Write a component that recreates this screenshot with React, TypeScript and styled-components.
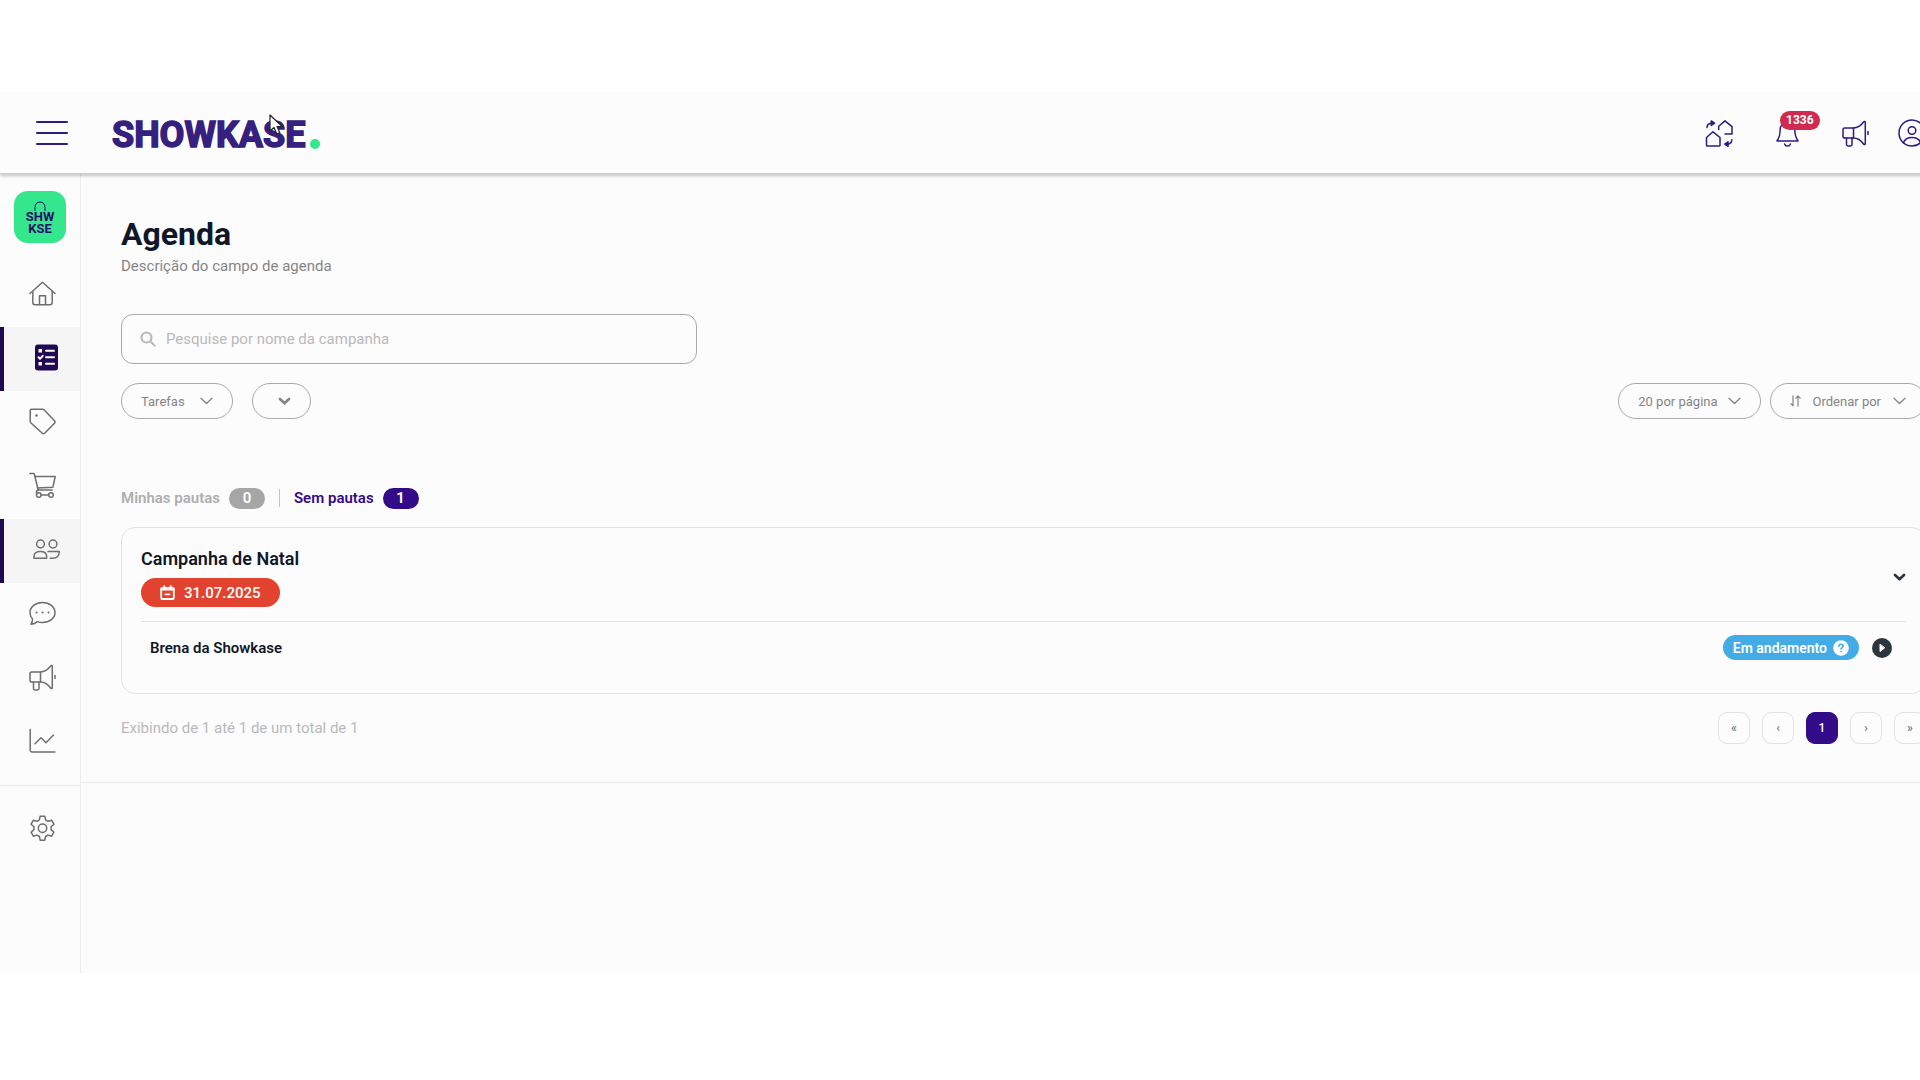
import React from "react";
import styled, { createGlobalStyle } from "styled-components";

const color = {
  ink: "#101828",
  brand: "#2f1a80",
  brandDeep: "#330a88",
  brandBar: "#210853",
  green: "#34e68c",
  line: "#e2e2e4",
  outline: "#a9a9a9",
  muted: "#858585",
  faint: "#b9b9b9",
  danger: "#e2432f",
  alert: "#d12a50",
  info: "#43ace6",
  dark: "#2c343e",
};

const GlobalStyle = createGlobalStyle`
  * { box-sizing: border-box; }
  body {
    margin: 0;
    background: #fefefe;
    color: ${color.ink};
    font-family: Roboto, "Liberation Sans", sans-serif;
    font-size: 15px;
  }
  button, input, select { font: inherit; color: inherit; }
`;

const Page = styled.div`
  position: relative;
  overflow: hidden;
  padding: 93px 0 107px;
`;

/* The app is slightly wider than the window, so its right edge is cut off. */
const Shell = styled.div`
  width: calc(100% + 6px);
  background: #fcfcfd;
`;

const Header = styled.header`
  position: relative;
  display: flex;
  align-items: center;
  height: 81px;
  padding-left: 36px;
  border-bottom: 1px solid #cfcfcf;
  box-shadow: 0 2px 3px rgba(0, 0, 0, 0.22);
`;

const IconButton = styled.button<{ $dark?: boolean }>`
  position: relative;
  display: flex;
  align-items: center;
  justify-content: center;
  padding: 0;
  border: 0;
  background: none;
  color: ${(p) => (p.$dark ? color.dark : color.brand)};
  cursor: pointer;
`;

const Logo = styled.a`
  display: flex;
  align-items: flex-end;
  gap: 5px;
  margin-left: 44px;
  padding-top: 4px;
  color: #36207f;
  font-size: 36px;
  font-weight: 700;
  line-height: 40px;
  text-decoration: none;
  -webkit-text-stroke: 1.5px #36207f;
`;

const LogoDot = styled.span`
  width: 10px;
  height: 10px;
  margin-bottom: 6px;
  border-radius: 50%;
  background: ${color.green};
`;

const HeaderActions = styled.nav`
  display: flex;
  align-items: center;
  gap: 43px;
  margin: 0 29px 0 auto;
`;

const CountBadge = styled.span`
  position: absolute;
  top: -9px;
  left: 4px;
  padding: 0 6px;
  border-radius: 10px;
  background: ${color.alert};
  color: #fff;
  font-size: 12px;
  font-weight: 700;
  line-height: 19px;
`;

const Body = styled.div`
  display: flex;
  align-items: stretch;
  min-height: 799px;
`;

const Sidebar = styled.aside`
  flex: none;
  width: 81px;
  padding-top: 17px;
  border-right: 1px solid #ececee;
`;

const StoreTile = styled.a`
  display: flex;
  flex-direction: column;
  align-items: center;
  width: 52px;
  height: 52px;
  margin: 0 0 20px 14px;
  padding-top: 10px;
  border-radius: 14px;
  background: ${color.green};
  color: #240f6b;
  font-size: 13px;
  font-weight: 700;
  line-height: 12px;
  text-decoration: none;
`;

const NavItem = styled.a<{ $active?: boolean }>`
  display: flex;
  align-items: center;
  height: 64px;
  padding: 0 0 4px 29px;
  border-left: ${(p) => (p.$active ? `4px solid ${color.brandBar}` : "0")};
  background: ${(p) => (p.$active ? "#f5f5f6" : "transparent")};
  color: #6e6e6e;
`;

const NavFooter = styled.div`
  margin-top: 10px;
  padding-top: 12px;
  border-top: 1px solid #ececee;
`;

const Main = styled.main`
  flex: 1;
  min-width: 0;
`;

const Content = styled.div`
  padding: 38px 0 38px 40px;
  border-bottom: 1px solid #ececee;
`;

const Title = styled.h1`
  margin: 0;
  font-size: 32px;
  font-weight: 700;
  line-height: 44px;
`;

const Subtitle = styled.p`
  margin: 0;
  color: ${color.muted};
  line-height: 20px;
`;

const SearchBox = styled.label`
  display: flex;
  align-items: center;
  gap: 10px;
  width: 576px;
  height: 50px;
  margin-top: 38px;
  padding: 0 18px;
  border: 1px solid ${color.outline};
  border-radius: 12px;
  color: ${color.faint};
`;

const SearchInput = styled.input`
  flex: 1;
  padding: 0;
  border: 0;
  outline: 0;
  background: none;
  color: ${color.ink};
  &::placeholder { color: ${color.faint}; opacity: 1; }
`;

const Filters = styled.div`
  display: flex;
  justify-content: space-between;
  margin-top: 19px;
`;

const FilterGroup = styled.div<{ $gap: number }>`
  display: flex;
  gap: ${(p) => p.$gap}px;
`;

const Pill = styled.label<{ $gap?: number }>`
  display: flex;
  align-items: center;
  gap: ${(p) => p.$gap ?? 10}px;
  height: 36px;
  padding: 0 19px;
  border: 1px solid ${color.outline};
  border-radius: 18px;
  color: ${color.muted};
  font-size: 13px;
`;

const PillSelect = styled.select`
  padding: 0;
  border: 0;
  outline: 0;
  background: none;
  appearance: none;
  field-sizing: content;
  cursor: pointer;
`;

const Tabs = styled.div`
  display: flex;
  align-items: center;
  gap: 14px;
  height: 22px;
  margin-top: 68px;
`;

const Tab = styled.button<{ $active?: boolean }>`
  display: flex;
  align-items: center;
  gap: 9px;
  padding: 0;
  border: 0;
  background: none;
  color: ${(p) => (p.$active ? color.brandDeep : "#aeaeae")};
  font-weight: 600;
  cursor: pointer;
`;

const TabCount = styled.span<{ $active?: boolean }>`
  width: 36px;
  border-radius: 11px;
  background: ${(p) => (p.$active ? color.brandDeep : "#a6a6a6")};
  color: #fff;
  line-height: 21px;
  text-align: center;
`;

const TabDivider = styled.span`
  width: 1px;
  height: 18px;
  background: #c4c4c4;
`;

const Card = styled.section`
  margin-top: 18px;
  padding: 19px 19px 28px;
  border: 1px solid ${color.line};
  border-radius: 14px;
`;

const CardHead = styled.div`
  display: flex;
  align-items: center;
  justify-content: space-between;
  padding-bottom: 14px;
  border-bottom: 1px solid ${color.line};
`;

const CardTitle = styled.h2`
  margin: 0 0 7px;
  font-size: 18px;
  font-weight: 600;
  line-height: 24px;
`;

const DateTag = styled.span`
  display: inline-flex;
  align-items: center;
  gap: 9px;
  height: 29px;
  padding: 0 19px;
  border-radius: 15px;
  background: ${color.danger};
  color: #fff;
  font-weight: 500;
`;

const TaskRow = styled.div`
  display: flex;
  align-items: center;
  gap: 13px;
  padding: 13px 14px 5px 9px;
`;

const TaskName = styled.span`
  flex: 1;
  font-weight: 600;
`;

const Status = styled.span`
  display: flex;
  align-items: center;
  gap: 6px;
  height: 25px;
  padding: 0 10px;
  border-radius: 13px;
  background: ${color.info};
  color: #fff;
  font-size: 14px;
  font-weight: 600;
`;

const Footer = styled.div`
  display: flex;
  align-items: center;
  justify-content: space-between;
  margin-top: 18px;
  color: ${color.faint};
`;

const Pagination = styled.nav`
  display: flex;
  gap: 12px;
`;

const PageButton = styled.button<{ $active?: boolean }>`
  width: 32px;
  height: 32px;
  padding: 0;
  border: 1px solid ${(p) => (p.$active ? color.brandDeep : color.line)};
  border-radius: 9px;
  background: ${(p) => (p.$active ? color.brandDeep : "transparent")};
  color: ${(p) => (p.$active ? "#fff" : "#777")};
  font-size: 12px;
  font-weight: 500;
  cursor: pointer;
`;

const Pointer = styled.svg`
  position: absolute;
  left: 268px;
  top: 114px;
`;

type IconProps = {
  w?: number;
  h?: number;
  box?: string;
  stroke?: number;
  children: React.ReactNode;
};

const Icon = ({ w = 27, h = 27, box = "0 0 27 27", stroke = 1.5, children }: IconProps) => (
  <svg
    width={w}
    height={h}
    viewBox={box}
    fill="none"
    stroke="currentColor"
    strokeWidth={stroke}
    strokeLinecap="round"
    strokeLinejoin="round"
    aria-hidden="true"
  >
    {children}
  </svg>
);

const MenuIcon = () => (
  <Icon w={32} h={26} box="0 0 32 26" stroke={2}>
    <path d="M1 2h30M1 13h30M1 24h30" />
  </Icon>
);

const SwapIcon = () => (
  <Icon w={28}>
    <path d="M1 25.2V17.5L7.5 11.8l7 5.7v7.7a.9.9 0 0 1-.9.9H1.9a.9.9 0 0 1-.9-.9z" />
    <path d="M13.2 9.500V6.200L19.500.9 26.500 6.700v7.400h-7" />
    <path d="M1.500 7.500C1.500 4.500 3 3.200 6.500 3.200M26.300 19.800c0 3-1.500 4.300-4.500 4.300" />
    <path d="M5.800.900 9 3.200 5.800 5.500zM22.500 21.800l-3.200 2.300 3.200 2.300z" fill="currentColor" />
  </Icon>
);

const BellIcon = () => (
  <Icon w={23} h={27} box="0 0 23 27">
    <path d="M11.500 2.500c-4.600 0-7.300 3.200-7.300 7.300 0 6-1.200 8.200-3.200 11.200h21c-2-3-3.200-5.200-3.200-11.200 0-4.100-2.700-7.300-7.300-7.300z" />
    <path d="M8.600 24c.4 1.400 1.500 2.100 2.900 2.100s2.500-.7 2.900-2.100" />
  </Icon>
);

const MegaphoneIcon = () => (
  <Icon>
    <path d="M11.500 8H2.800C1.700 8 1 8.700 1 9.800v6.400c0 1.100.7 1.800 1.800 1.800h8.700z" />
    <path d="M11.500 8c4.500 0 7.500-2.500 10.300-6.200.4-.5 1.500-.5 1.500.5v21.400c0 1-1.100 1-1.500.5C19 20.500 16 18 11.500 18" />
    <path d="M4.500 18v6.600c0 .8.600 1.400 1.400 1.400h2.700c.8 0 1.400-.6 1.400-1.400V18" />
    <path d="M26 11.500v3" />
  </Icon>
);

const UserIcon = () => (
  <Icon w={28} h={28} box="0 0 28 28">
    <circle cx="14" cy="14" r="13" />
    <circle cx="14" cy="11.500" r="3.800" />
    <path d="M5.500 23.800c1-3.300 4.400-5.400 8.500-5.400s7.500 2.100 8.500 5.400" />
  </Icon>
);

const HomeIcon = () => (
  <Icon>
    <path d="M1 13.500 13.500 2.200 26 13.500" />
    <path d="M3.800 11.500v11c0 1.400.9 2.300 2.300 2.300h14.800c1.400 0 2.300-.9 2.300-2.300v-11" />
    <path d="M10.500 24.500v-8.700h6v8.700" />
  </Icon>
);

const ChecklistIcon = () => (
  <Icon stroke={2}>
    <rect x="2" y=".500" width="23" height="26" rx="3" fill="#210853" stroke="none" />
    <rect x="5.500" y="5" width="3.500" height="3.500" fill="#fff" stroke="none" />
    <path d="M5.500 13.300l1.500 1.500 2.700-3" stroke="#fff" />
    <rect x="5.500" y="18" width="3.500" height="3.500" fill="#fff" stroke="none" />
    <path d="M13 6.800h8M13 13.300h8M13 19.800h8" stroke="#fff" />
  </Icon>
);

const TagIcon = () => (
  <Icon>
    <path d="M1.200 2.500c0-.8.600-1.300 1.300-1.300h11c.6 0 1.100.2 1.500.6l10.500 11c.7.8.7 1.600 0 2.400l-9.800 10c-.8.7-1.700.7-2.400 0L1.800 14.700c-.4-.4-.6-.9-.6-1.500z" />
    <circle cx="7.500" cy="7.500" r="1.200" fill="currentColor" stroke="none" />
  </Icon>
);

const CartIcon = () => (
  <Icon>
    <path d="M.8 1.500h4.400l4 16.500h14" />
    <path d="M5.900 4.500h20.300l-2.300 10.700L8.500 16" />
    <circle cx="9.800" cy="23" r="2.300" />
    <circle cx="22" cy="23" r="2.300" />
    <path d="M9.200 18c-1.800.6-2 2-1.600 3.200M12 23h7.700" />
  </Icon>
);

const UsersIcon = () => (
  <Icon>
    <circle cx="7.500" cy="8" r="3.900" />
    <circle cx="20" cy="8" r="3.900" />
    <path d="M1 22.300v-2c0-3 2.300-4.800 6.300-4.800s6.300 1.800 6.300 4.800v2z" />
    <path d="M15 15.500h11.300c0 4-2.500 6.800-6.500 6.800h-2.500" />
  </Icon>
);

const ChatIcon = () => (
  <Icon>
    <path d="M13.500 2.500c7 0 12.500 4.400 12.500 10s-5.500 10-12.500 10c-2 0-3.800-.3-5.300-.9-1.500 1.500-3.700 2.400-6.200 2.700 1-1.500 1.700-3 1.500-5.300C1.800 17.200 1 15 1 12.500c0-5.600 5.500-10 12.500-10z" />
    <path d="M7.500 12.500h.1M13.500 12.500h.1M19.500 12.500h.1" strokeWidth="2" />
  </Icon>
);

const ChartIcon = () => (
  <Icon>
    <path d="M1.200 1.500v20.700c0 1 .7 1.700 1.700 1.700h23" />
    <path d="M6 15.800l6-6 5 5L24.500 7" />
  </Icon>
);

const GearIcon = () => (
  <Icon>
    <path d="M11.200 1.200h4.600l.8 3.700 2.400 1.400 3.600-1.100 2.300 4-2.800 2.600v2.800l2.800 2.600-2.300 4-3.600-1.100-2.400 1.400-.8 3.700h-4.600l-.8-3.700L8 20.100l-3.600 1.100-2.300-4 2.800-2.600v-2.800L2.100 9.200l2.300-4L8 6.300l2.400-1.400z" />
    <circle cx="13.500" cy="13.200" r="4.200" />
  </Icon>
);

const SearchIcon = () => (
  <Icon w={16} h={16} box="0 0 16 16" stroke={2.2}>
    <circle cx="6.500" cy="6.500" r="5" />
    <path d="M10.500 10.500l4 4" />
  </Icon>
);

const Chevron = ({ bold }: { bold?: boolean }) => (
  <Icon w={13} h={8} box="0 0 13 8" stroke={bold ? 2.6 : 1.3}>
    <path d={bold ? "M2 2l4.500 4.300L11 2" : "M1 1.200l5.500 5.300L12 1.200"} />
  </Icon>
);

const SortIcon = () => (
  <Icon w={11} h={12} box="0 0 11 12" stroke={1.2}>
    <path d="M3 .8v10M.8 8.600 3 10.800 M8 11.200v-10M5.900 3.200 8 1l2.200 2.200" />
  </Icon>
);

const CalendarIcon = () => (
  <Icon w={15} h={15} box="0 0 15 15" stroke={1.8}>
    <rect x="1.200" y="2.800" width="12.600" height="11.200" rx="1" />
    <path d="M1.200 4.500h12.600M4.300.9v2.500M10.700.9v2.500M5.500 9.300h4" />
  </Icon>
);

const HelpIcon = () => (
  <Icon w={16} h={16} box="0 0 16 16" stroke={1.6}>
    <circle cx="8" cy="8" r="7.800" fill="#fff" stroke="none" />
    <path d="M5.800 6.200c.1-1.200 1-1.900 2.200-1.900s2.200.7 2.200 1.800c0 1.400-2.200 1.500-2.200 2.900M8 11.600v.1" stroke="#43ace6" />
  </Icon>
);

const PlayIcon = () => (
  <Icon w={20} h={20} box="0 0 20 20">
    <circle cx="10" cy="10" r="10" fill="#2c343e" stroke="none" />
    <path d="M8 6.500v7l4.500-3.500z" fill="#fff" stroke="#fff" strokeWidth="1" />
  </Icon>
);

const BagHandle = () => (
  <Icon w={12} h={10} box="0 0 12 10" stroke={1}>
    <path d="M1 9.500V6.500C1 3 3 1 6 1s5 2 5 5.500v3" />
  </Icon>
);

const navItems = [
  { label: "Início", icon: HomeIcon },
  { label: "Agenda", icon: ChecklistIcon, active: true },
  { label: "Ofertas", icon: TagIcon },
  { label: "Pedidos", icon: CartIcon },
  { label: "Clientes", icon: UsersIcon, active: true },
  { label: "Mensagens", icon: ChatIcon },
  { label: "Campanhas", icon: MegaphoneIcon },
  { label: "Relatórios", icon: ChartIcon },
];

const pages = [
  { text: "«", label: "Primeira página" },
  { text: "‹", label: "Página anterior" },
  { text: "1", label: "Página 1", active: true },
  { text: "›", label: "Próxima página" },
  { text: "»", label: "Última página" },
];

export default function App() {
  return (
    <Page>
      <GlobalStyle />
      <Shell>
        <Header>
          <IconButton aria-label="Menu">
            <MenuIcon />
          </IconButton>
          <Logo href="#">
            SHOWKASE
            <LogoDot />
          </Logo>
          <HeaderActions>
            <IconButton aria-label="Trocar loja">
              <SwapIcon />
            </IconButton>
            <IconButton aria-label="Notificações">
              <BellIcon />
              <CountBadge>1336</CountBadge>
            </IconButton>
            <IconButton aria-label="Novidades">
              <MegaphoneIcon />
            </IconButton>
          </HeaderActions>
          <IconButton aria-label="Perfil">
            <UserIcon />
          </IconButton>
        </Header>

        <Body>
          <Sidebar>
            <StoreTile href="#">
              <BagHandle />
              <span>SHW</span>
              <span>KSE</span>
            </StoreTile>
            {navItems.map(({ label, icon: Glyph, active }) => (
              <NavItem key={label} href="#" aria-label={label} $active={active}>
                <Glyph />
              </NavItem>
            ))}
            <NavFooter>
              <NavItem href="#" aria-label="Configurações">
                <GearIcon />
              </NavItem>
            </NavFooter>
          </Sidebar>

          <Main>
            <Content>
              <Title>Agenda</Title>
              <Subtitle>Descrição do campo de agenda</Subtitle>

              <SearchBox>
                <SearchIcon />
                <SearchInput
                  type="text"
                  aria-label="Pesquisar"
                  placeholder="Pesquise por nome da campanha"
                />
              </SearchBox>

              <Filters>
                <FilterGroup $gap={19}>
                  <Pill $gap={15}>
                    <PillSelect aria-label="Tipo">
                      <option>Tarefas</option>
                    </PillSelect>
                    <Chevron />
                  </Pill>
                  <Pill $gap={6}>
                    <PillSelect aria-label="Filtro">
                      <option aria-label="Todos"></option>
                    </PillSelect>
                    <Chevron bold />
                  </Pill>
                </FilterGroup>
                <FilterGroup $gap={9}>
                  <Pill>
                    <PillSelect aria-label="Itens por página">
                      <option>20 por página</option>
                    </PillSelect>
                    <Chevron />
                  </Pill>
                  <Pill $gap={12}>
                    <SortIcon />
                    <PillSelect aria-label="Ordenação">
                      <option>Ordenar por</option>
                    </PillSelect>
                    <Chevron />
                  </Pill>
                </FilterGroup>
              </Filters>

              <Tabs>
                <Tab>
                  Minhas pautas <TabCount>0</TabCount>
                </Tab>
                <TabDivider />
                <Tab $active>
                  Sem pautas <TabCount $active>1</TabCount>
                </Tab>
              </Tabs>

              <Card>
                <CardHead>
                  <div>
                    <CardTitle>Campanha de Natal</CardTitle>
                    <DateTag>
                      <CalendarIcon />
                      31.07.2025
                    </DateTag>
                  </div>
                  <IconButton aria-label="Recolher" $dark>
                    <Chevron bold />
                  </IconButton>
                </CardHead>
                <TaskRow>
                  <TaskName>Brena da Showkase</TaskName>
                  <Status>
                    Em andamento
                    <HelpIcon />
                  </Status>
                  <IconButton aria-label="Iniciar">
                    <PlayIcon />
                  </IconButton>
                </TaskRow>
              </Card>

              <Footer>
                <span>Exibindo de 1 até 1 de um total de 1</span>
                <Pagination aria-label="Paginação">
                  {pages.map((p) => (
                    <PageButton key={p.label} aria-label={p.label} $active={p.active}>
                      {p.text}
                    </PageButton>
                  ))}
                </Pagination>
              </Footer>
            </Content>
          </Main>
        </Body>
      </Shell>

      <Pointer width="16" height="22" viewBox="0 0 16 22" aria-hidden="true">
        <path
          d="M2 1v16l4-3.500 2.800 6.500 3-1.300L9 12.500h5.200z"
          fill="#fff"
          stroke="#222"
          strokeWidth="1.200"
          strokeLinejoin="round"
        />
      </Pointer>
    </Page>
  );
}
